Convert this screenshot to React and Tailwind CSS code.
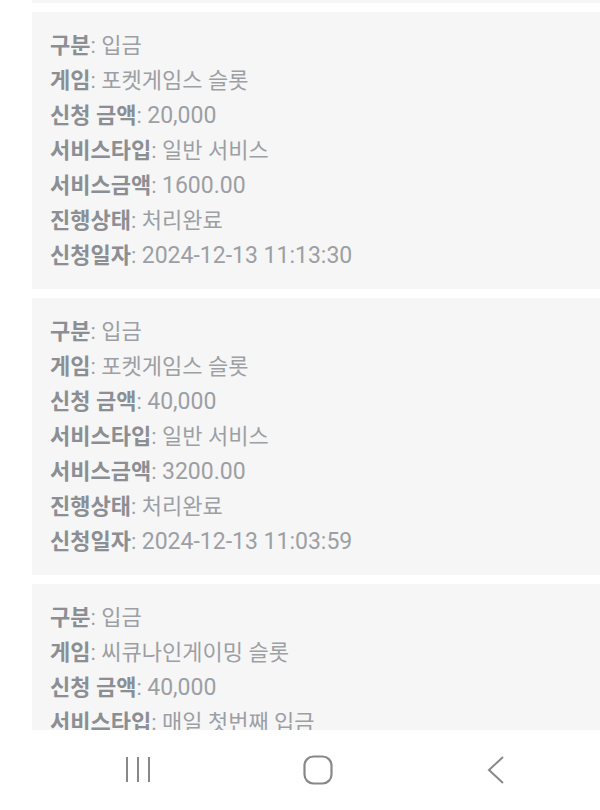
import React from "react";

const records = [
  {
    type: "입금",
    game: "포켓게임스 슬롯",
    amount: "20,000",
    serviceType: "일반 서비스",
    serviceAmount: "1600.00",
    status: "처리완료",
    date: "2024-12-13 11:13:30",
  },
  {
    type: "입금",
    game: "포켓게임스 슬롯",
    amount: "40,000",
    serviceType: "일반 서비스",
    serviceAmount: "3200.00",
    status: "처리완료",
    date: "2024-12-13 11:03:59",
  },
  {
    type: "입금",
    game: "씨큐나인게이밍 슬롯",
    amount: "40,000",
    serviceType: "매일 첫번째 입금",
    serviceAmount: "0.00",
    status: "처리완료",
    date: "2024-12-13 10:41:12",
  },
];

function Row({ label, value, num }) {
  return (
    <p className="h-[35px] leading-[35px] whitespace-nowrap">
      <span className="font-bold text-[#8b8e93]">{label}</span>
      <span className="text-[#9c9fa4]">: </span>
      <span className={num ? "text-[#9c9fa4] text-[23px]" : "text-[#9c9fa4]"}>{value}</span>
    </p>
  );
}

export default function App() {
  return (
    <div
      className="w-[600px] h-[810px] bg-white flex flex-col overflow-hidden"
      style={{ fontFamily: 'Roboto, "Noto Sans CJK KR", sans-serif' }}
    >
      <div className="flex-1 overflow-hidden flex flex-col gap-[9px]">
        {/* tail of the previous card */}
        <div className="ml-[32px] h-[3px] bg-[#f6f6f6] shrink-0" />
        {records.map((r, i) => (
          <div key={i} className="ml-[32px] bg-[#f6f6f6] pl-[18px] py-[16px] text-[22px] shrink-0">
            <Row label="구분" value={r.type} />
            <Row label="게임" value={r.game} />
            <Row label="신청 금액" value={r.amount} num />
            <Row label="서비스타입" value={r.serviceType} />
            <Row label="서비스금액" value={r.serviceAmount} num />
            <Row label="진행상태" value={r.status} />
            <Row label="신청일자" value={r.date} num />
          </div>
        ))}
      </div>
      <div className="h-[80px] shrink-0 bg-white flex items-center pl-[123px] gap-[150px]">
        <svg width="30" height="30" viewBox="0 0 30 30">
          <g stroke="#888" strokeWidth="2">
            <line x1="4" y1="2" x2="4" y2="27" />
            <line x1="15" y1="2" x2="15" y2="27" />
            <line x1="26" y1="2" x2="26" y2="27" />
          </g>
        </svg>
        <svg width="30" height="30" viewBox="0 0 30 30">
          <rect x="1.5" y="1.5" width="27" height="27" rx="9" fill="none" stroke="#888" strokeWidth="2.2" />
        </svg>
        <svg width="30" height="30" viewBox="0 0 30 30" className="-ml-[3px]">
          <polyline points="23,2 9,15 23,28" fill="none" stroke="#888" strokeWidth="2" />
        </svg>
      </div>
    </div>
  );
}
